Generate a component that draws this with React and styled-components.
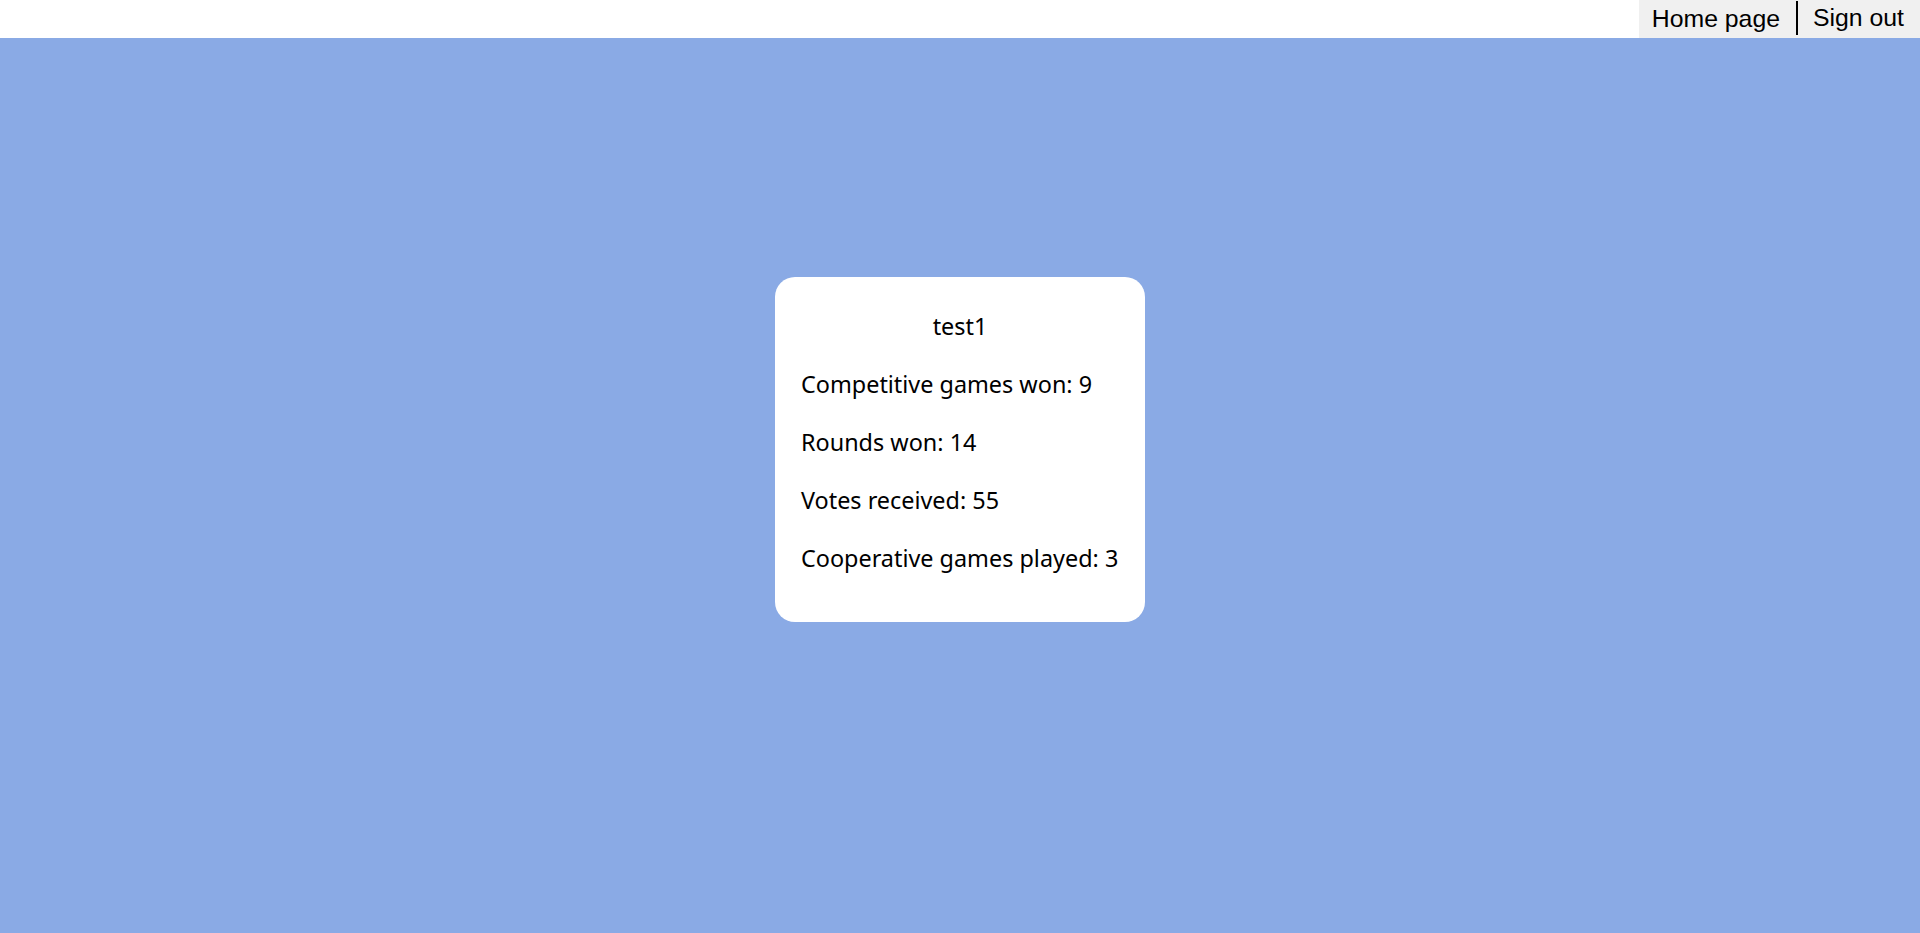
import React from 'react'
import styled, { createGlobalStyle } from 'styled-components'

const stats = [
  { label: 'Competitive games won', value: 9 },
  { label: 'Rounds won', value: 14 },
  { label: 'Votes received', value: 55 },
  { label: 'Cooperative games played', value: 3 },
]

const App = () => {
  return (
    <Page>
      <GlobalStyle />
      <TopBar>
        <Nav>
          <NavLink href="#">Home page</NavLink>
          <NavLink href="#" divided>
            Sign out
          </NavLink>
        </Nav>
      </TopBar>
      <Main>
        <Card>
          <Username>test1</Username>
          {stats.map((s) => (
            <Stat key={s.label}>
              {s.label}: {s.value}
            </Stat>
          ))}
        </Card>
      </Main>
    </Page>
  )
}

const GlobalStyle = createGlobalStyle`
  html, body {
    margin: 0;
    padding: 0;
  }
  body {
    background: #8aaae5;
  }
`

const Page = styled.div`
  min-height: 100vh;
  display: flex;
  flex-direction: column;
`

const TopBar = styled.header`
  height: 38px;
  background: #ffffff;
  display: flex;
  justify-content: flex-end;
`

const Nav = styled.nav`
  display: flex;
  align-items: stretch;
  background: #f0f0f0;
  padding-left: 13px;
`

const NavLink = styled.a`
  display: flex;
  align-items: center;
  font-family: 'Liberation Sans', Arial, sans-serif;
  font-size: 24.8px;
  color: #000;
  text-decoration: none;
  padding: 0 16px 0 ${(props) => (props.divided ? '15px' : '0')};
  border-left: ${(props) => (props.divided ? '2px solid #000' : 'none')};
  margin: ${(props) => (props.divided ? '1px 0 3px' : '0')};
`

const Main = styled.main`
  flex: 1;
  display: flex;
  justify-content: center;
  align-items: flex-start;
  padding-top: 239px;
`

const Card = styled.section`
  width: 370px;
  height: 345px;
  box-sizing: border-box;
  background: #ffffff;
  border-radius: 20px;
  padding: 33px 26px 0;
  display: flex;
  flex-direction: column;
  gap: 26px;
  font-family: 'Noto Sans', 'Open Sans', sans-serif;
  color: #000;
`

const Username = styled.p`
  margin: 0;
  text-align: center;
  font-size: 23.4px;
  line-height: 32px;
`

const Stat = styled.p`
  margin: 0;
  font-size: 23.4px;
  line-height: 32px;
  white-space: nowrap;
`

export default App
